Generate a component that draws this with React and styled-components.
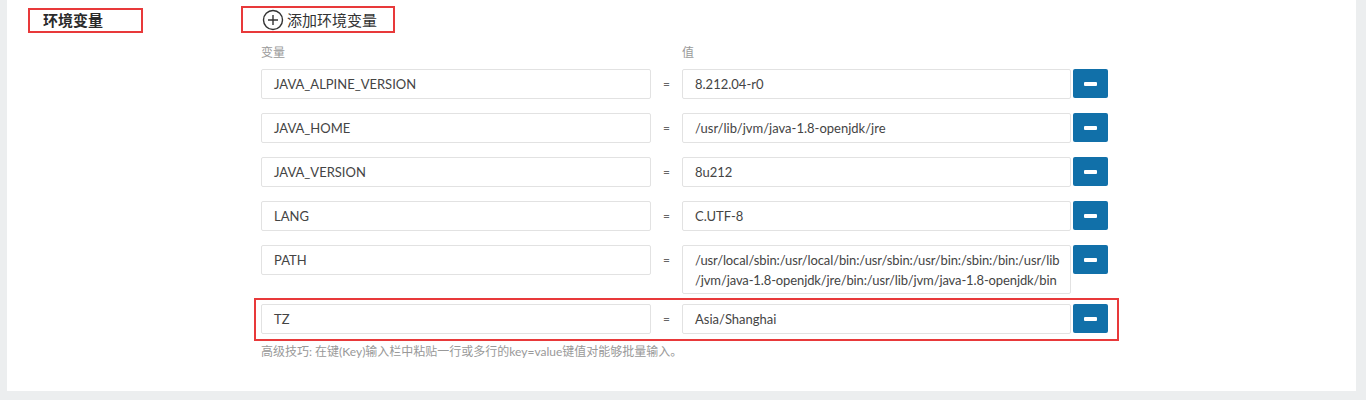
import React from 'react';
import styled, { createGlobalStyle } from 'styled-components';

const GlobalStyle = createGlobalStyle`
  html, body {
    margin: 0;
    padding: 0;
    background: #eceeef;
  }
  body {
    font-family: Lato, "Noto Sans CJK SC", sans-serif;
    color: #333;
  }
`;

const Panel = styled.div`
  margin-left: 7px;
  width: 1349px;
  height: 391px;
  background: #fff;
  box-sizing: border-box;
`;

const Header = styled.div`
  display: flex;
  align-items: flex-start;
  padding: 6px 0 0 21px;
`;

const Annotated = styled.div`
  border: 2px solid #e8393a;
  box-sizing: border-box;
`;

const SectionTitle = styled(Annotated)`
  width: 115px;
  height: 25px;
  margin-top: 2px;
  padding-left: 13px;
  font-size: 15px;
  font-weight: 700;
  line-height: 20px;
  color: #2b2b2b;
`;

const AddButton = styled(Annotated)`
  display: flex;
  align-items: center;
  gap: 3px;
  width: 154px;
  height: 27px;
  margin-left: 98px;
  padding-left: 19px;
  font-size: 15px;
  line-height: 20px;
  color: #333;
  cursor: pointer;
`;

const Form = styled.div`
  margin-left: 254px;
  width: 870px;
`;

const ColumnLabels = styled.div`
  display: grid;
  grid-template-columns: 390px 31px 389px;
  margin-top: 12px;
  font-size: 12px;
  line-height: 16px;
  color: #999;
`;

const Rows = styled.div`
  display: flex;
  flex-direction: column;
  gap: 14px;
  margin-top: 8px;
`;

const Row = styled.div`
  display: grid;
  grid-template-columns: 390px 31px 389px 2px 35px;
  align-items: start;
`;

const HighlightRow = styled(Annotated)`
  align-self: flex-start;
  margin: -10px 0 0 -7px;
  padding: 4px 9px 5px 5px;
`;

const Field = styled.div`
  box-sizing: border-box;
  min-height: 30px;
  padding: ${p => (p.$multi ? '4px 8px 3px 12px' : '5px 12px')};
  border: 1px solid #e2e2e2;
  border-radius: 2px;
  font-size: 13px;
  line-height: ${p => (p.$multi ? '20px' : '18px')};
  letter-spacing: ${p => (p.$multi ? '-0.12px' : 'normal')};
  color: #444;
`;

const Segment = styled.span`
  white-space: nowrap;
`;

const Equals = styled.div`
  text-align: center;
  font-size: 12px;
  line-height: 30px;
  color: #666;
`;

const RemoveButton = styled.button`
  grid-column: 5;
  display: flex;
  align-items: center;
  justify-content: center;
  width: 35px;
  height: 29px;
  padding: 0;
  border: none;
  border-radius: 2px;
  background: #1170a9;
  cursor: pointer;

  &::before {
    content: '';
    width: 13px;
    height: 4px;
    border-radius: 1px;
    background: #fff;
  }
`;

const Hint = styled.div`
  margin-top: 3px;
  font-size: 12px;
  line-height: 16px;
  color: #999;
`;

const PlusCircle = () => (
  <svg width="22" height="22" viewBox="0 0 22 22">
    <circle cx="11" cy="11" r="9.5" fill="none" stroke="#333" strokeWidth="1.4" />
    <path d="M11 6v10M6 11h10" stroke="#333" strokeWidth="1.4" />
  </svg>
);

const envs = [
  { key: 'JAVA_ALPINE_VERSION', value: ['8.212.04-r0'] },
  { key: 'JAVA_HOME', value: ['/usr/lib/jvm/java-1.8-openjdk/jre'] },
  { key: 'JAVA_VERSION', value: ['8u212'] },
  { key: 'LANG', value: ['C.UTF-8'] },
  {
    key: 'PATH',
    value: [
      '/usr/local/sbin:/usr/local/bin:/usr/sbin:/usr/bin:/sbin:/bin:/usr/lib',
      '/jvm/java-1.8-openjdk/jre/bin:/usr/lib/jvm/java-1.8-openjdk/bin',
    ],
  },
];

const EnvRow = ({ name, value }) => {
  const multi = value.length > 1;
  return (
    <Row>
      <Field>{name}</Field>
      <Equals>=</Equals>
      <Field $multi={multi}>
        {value.map((part, i) => (
          <React.Fragment key={i}>
            {i > 0 && <wbr />}
            <Segment>{part}</Segment>
          </React.Fragment>
        ))}
      </Field>
      <RemoveButton aria-label="删除" />
    </Row>
  );
};

export default function App() {
  return (
    <>
      <GlobalStyle />
      <Panel>
        <Header>
          <SectionTitle>环境变量</SectionTitle>
          <AddButton>
            <PlusCircle />
            添加环境变量
          </AddButton>
        </Header>
        <Form>
          <ColumnLabels>
            <span>变量</span>
            <span />
            <span>值</span>
          </ColumnLabels>
          <Rows>
            {envs.map(e => (
              <EnvRow key={e.key} name={e.key} value={e.value} />
            ))}
            <HighlightRow>
              <EnvRow name="TZ" value={['Asia/Shanghai']} />
            </HighlightRow>
          </Rows>
          <Hint>高级技巧: 在键(Key)输入栏中粘贴一行或多行的key=value键值对能够批量输入。</Hint>
        </Form>
      </Panel>
    </>
  );
}
